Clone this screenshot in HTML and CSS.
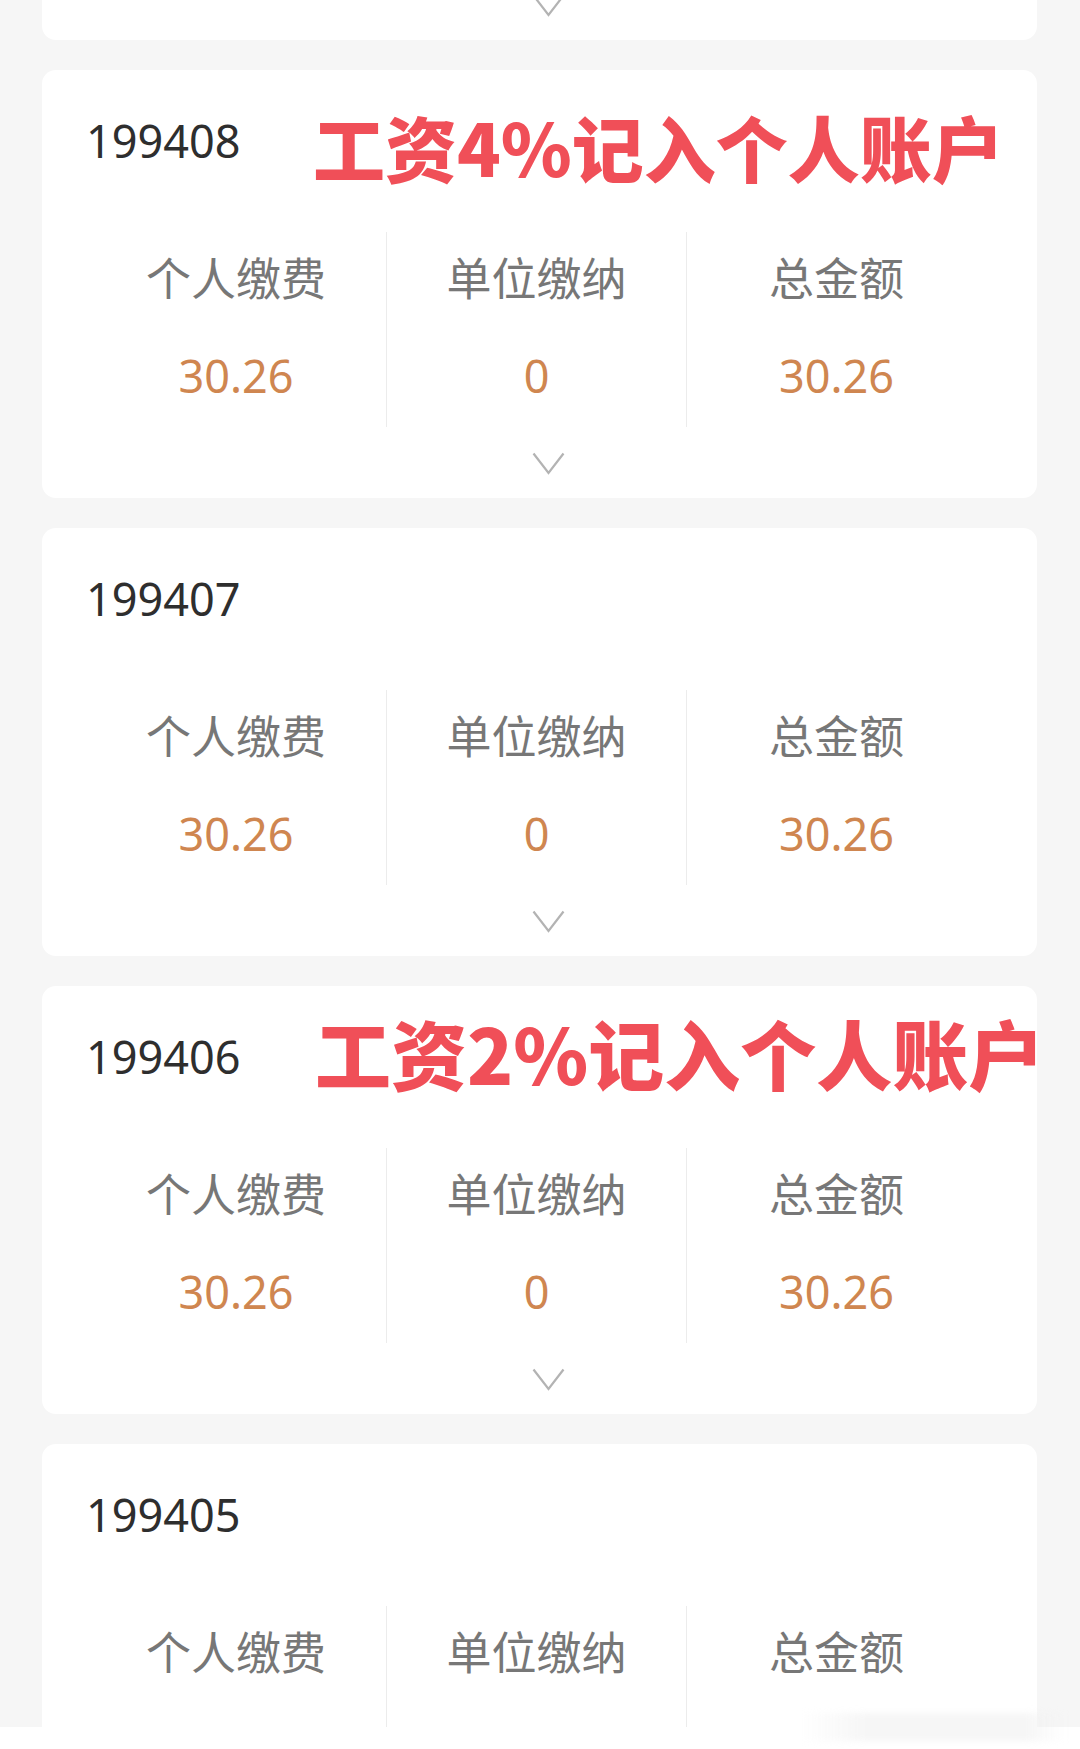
FILE: index.html
```html
<!DOCTYPE html>
<html lang="zh-CN">
<head>
<meta charset="utf-8">
<title>缴费记录</title>
<link rel="stylesheet" href="styles.css">
</head>
<body>
<div class="list">
  <section class="card">
    <div class="title">199409</div>
    <div class="stats">
      <div class="col"><div class="label">个人缴费</div><div class="num">30.26</div></div>
      <div class="col"><div class="label">单位缴纳</div><div class="num">0</div></div>
      <div class="col"><div class="label">总金额</div><div class="num">30.26</div></div>
    </div>
    <div class="more"><svg width="33" height="23" viewBox="0 0 33 23"><polyline points="1.5,1.5 16.5,21 31.5,1.5" fill="none" stroke="#b3b3b3" stroke-width="2.2"/></svg></div>
  </section>

  <section class="card">
    <div class="title">199408</div>
    <div class="note note-a">工资4%记入个人账户</div>
    <div class="stats">
      <div class="col"><div class="label">个人缴费</div><div class="num">30.26</div></div>
      <div class="col"><div class="label">单位缴纳</div><div class="num">0</div></div>
      <div class="col"><div class="label">总金额</div><div class="num">30.26</div></div>
    </div>
    <div class="more"><svg width="33" height="23" viewBox="0 0 33 23"><polyline points="1.5,1.5 16.5,21 31.5,1.5" fill="none" stroke="#b3b3b3" stroke-width="2.2"/></svg></div>
  </section>

  <section class="card">
    <div class="title">199407</div>
    <div class="stats">
      <div class="col"><div class="label">个人缴费</div><div class="num">30.26</div></div>
      <div class="col"><div class="label">单位缴纳</div><div class="num">0</div></div>
      <div class="col"><div class="label">总金额</div><div class="num">30.26</div></div>
    </div>
    <div class="more"><svg width="33" height="23" viewBox="0 0 33 23"><polyline points="1.5,1.5 16.5,21 31.5,1.5" fill="none" stroke="#b3b3b3" stroke-width="2.2"/></svg></div>
  </section>

  <section class="card">
    <div class="title">199406</div>
    <div class="note note-b">工资2%记入个人账户</div>
    <div class="stats">
      <div class="col"><div class="label">个人缴费</div><div class="num">30.26</div></div>
      <div class="col"><div class="label">单位缴纳</div><div class="num">0</div></div>
      <div class="col"><div class="label">总金额</div><div class="num">30.26</div></div>
    </div>
    <div class="more"><svg width="33" height="23" viewBox="0 0 33 23"><polyline points="1.5,1.5 16.5,21 31.5,1.5" fill="none" stroke="#b3b3b3" stroke-width="2.2"/></svg></div>
  </section>

  <section class="card">
    <div class="title">199405</div>
    <div class="stats">
      <div class="col"><div class="label">个人缴费</div><div class="num">30.26</div></div>
      <div class="col"><div class="label">单位缴纳</div><div class="num">0</div></div>
      <div class="col"><div class="label">总金额</div><div class="num">30.26</div></div>
    </div>
    <div class="more"><svg width="33" height="23" viewBox="0 0 33 23"><polyline points="1.5,1.5 16.5,21 31.5,1.5" fill="none" stroke="#b3b3b3" stroke-width="2.2"/></svg></div>
  </section>
</div>
<div class="bottom-bar"><div class="smudge"></div></div>
</body>
</html>
```

FILE: styles.css
```css
html, body {
  margin: 0;
  padding: 0;
}
body {
  width: 1080px;
  height: 1749px;
  overflow: hidden;
  background: #f6f6f6;
  font-family: "Noto Sans", "Noto Sans CJK SC", sans-serif;
  position: relative;
}
.list {
  margin-top: -388px;
  padding: 0 43px 0 42px;
  display: flex;
  flex-direction: column;
  gap: 30px;
}
.card {
  position: relative;
  background: #fff;
  border-radius: 14px;
  height: 428px;
  box-sizing: border-box;
  padding: 41px 0 0 44px;
}
.title {
  font-size: 45px;
  line-height: 60px;
  color: #2e2e2e;
}
.note {
  position: absolute;
  white-space: nowrap;
  color: #f04f58;
  font-family: "Noto Sans CJK SC", sans-serif;
  font-weight: 900;
  text-shadow: 0 0 2px rgba(255,255,255,0.9);
}
.note-a {
  left: 271px;
  top: 40px;
  font-size: 72px;
  line-height: 72px;
}
.note-b {
  left: 273px;
  top: 28px;
  font-size: 76px;
  line-height: 76px;
}
.stats {
  margin-top: 61px;
  display: grid;
  grid-template-columns: repeat(3, 300px);
  height: 195px;
}
.col {
  display: flex;
  flex-direction: column;
  align-items: center;
  padding-top: 15px;
}
.col + .col {
  border-left: 1px solid #ececec;
}
.label {
  font-family: "Noto Sans CJK SC", sans-serif;
  font-size: 45px;
  line-height: 60px;
  color: #777;
}
.num {
  margin-top: 39px;
  font-size: 45px;
  line-height: 60px;
  color: #cf8650;
}
.more {
  margin: 25px 0 0 446px;
  height: 23px;
}
.more svg {
  display: block;
}
.bottom-bar {
  position: absolute;
  left: 0;
  right: 0;
  bottom: 0;
  height: 22px;
  background: #fff;
}
.smudge {
  position: absolute;
  left: 800px;
  right: 14px;
  bottom: 8px;
  height: 28px;
  background: linear-gradient(90deg, rgba(244,244,244,0), rgba(240,240,240,0.6) 25%, rgba(240,240,240,0.6) 85%, rgba(244,244,244,0));
  filter: blur(3px);
}
```
